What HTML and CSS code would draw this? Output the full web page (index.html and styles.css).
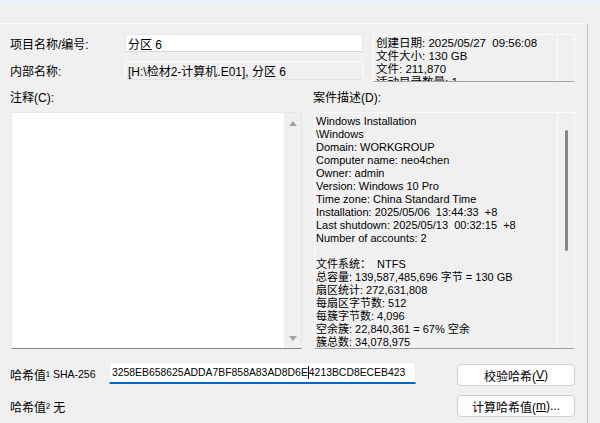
FILE: index.html
```html
<!DOCTYPE html>
<html lang="zh-CN">
<head>
<meta charset="utf-8">
<title>分区 6</title>
<link rel="stylesheet" href="styles.css">
</head>
<body>
<div class="titlebar"></div>
<div class="panel">
  <div class="head">
    <div class="lbl r1">项目名称/编号:</div>
    <div class="field edit r1">分区 6</div>
    <div class="info">
      <div class="info-text">
        <div>创建日期: 2025/05/27&nbsp; 09:56:08</div>
        <div>文件大小: 130 GB</div>
        <div>文件: 211,870</div>
        <div>活动目录数量: 1</div>
      </div>
      <div class="sb"></div>
    </div>
    <div class="lbl r2">内部名称:</div>
    <div class="field ro r2">[H:\检材2-计算机.E01], 分区 6</div>
  </div>

  <div class="boxes">
    <div class="col">
      <div class="cap">注释(C):</div>
      <div class="memo">
        <div class="memo-text"></div>
        <div class="memo-sb"><span class="arr up"></span><span class="arr down"></span></div>
      </div>
    </div>
    <div class="col">
      <div class="cap">案件描述(D):</div>
      <div class="desc">
        <div class="desc-text">
          <div>Windows Installation</div>
          <div>\Windows</div>
          <div>Domain: WORKGROUP</div>
          <div>Computer name: neo4chen</div>
          <div>Owner: admin</div>
          <div>Version: Windows 10 Pro</div>
          <div>Time zone: China Standard Time</div>
          <div>Installation: 2025/05/06&nbsp; 13:44:33&nbsp; +8</div>
          <div>Last shutdown: 2025/05/13&nbsp; 00:32:15&nbsp; +8</div>
          <div>Number of accounts: 2</div>
          <div>&nbsp;</div>
          <div>文件系统：&nbsp; NTFS</div>
          <div>总容量: 139,587,485,696 字节 = 130 GB</div>
          <div>扇区统计: 272,631,808</div>
          <div>每扇区字节数: 512</div>
          <div>每簇字节数: 4,096</div>
          <div>空余簇: 22,840,361 = 67% 空余</div>
          <div>簇总数: 34,078,975</div>
        </div>
        <div class="desc-sb"><span class="thumb"></span></div>
      </div>
    </div>
  </div>

  <div class="hash">
    <div class="lbl">哈希值¹<span class="alg">&nbsp;SHA-256</span></div>
    <div class="hash-input">3258EB658625ADDA7BF858A83AD8D6E<span class="caret"></span>4213BCD8ECEB423</div>
    <div class="gap"></div>
    <div class="btn b1">校验哈希(<u>V</u>)</div>
    <div class="lbl">哈希值² 无</div>
    <div class="spacer"></div>
    <div class="gap"></div>
    <div class="btn b2">计算哈希值(<u>m</u>)...</div>
  </div>
</div>
</body>
</html>
```
FILE: styles.css
```css
html, body {
  margin: 0;
  padding: 0;
}
body {
  width: 600px;
  height: 423px;
  overflow: hidden;
  background: #f0f0f0;
  font-family: "Liberation Sans", "Noto Sans CJK SC", sans-serif;
  font-size: 11px;
  color: #000;
}
.titlebar {
  height: 5px;
  background: #eef1f5;
}
.panel {
  margin-top: 18px;
  width: 588px;
  height: 400px;
  box-sizing: border-box;
  border-top: 1px solid #fbfbfb;
  border-right: 1px solid #bdbdbd;
  padding: 10px 0 0 10px;
}
.lbl {
  font-size: 12px;
  display: flex;
  align-items: center;
  white-space: nowrap;
}
.alg {
  font-size: 10.5px;
}
.head {
  display: grid;
  grid-template-columns: 115px 238px 10px 202px;
  grid-template-rows: 18px 19px;
  row-gap: 9px;
}
.r1 { grid-row: 1; }
.r2 { grid-row: 2; }
.lbl.r1, .lbl.r2 { grid-column: 1; }
.field {
  grid-column: 2;
  box-sizing: border-box;
  display: flex;
  align-items: center;
  padding-left: 2px;
  font-size: 12px;
  white-space: nowrap;
  overflow: hidden;
}
.field.edit {
  background: #fff;
  border: 1px solid #e6e6e6;
  border-bottom-color: #d8d8d8;
}
.field.ro {
  background: #f0f0f0;
  border: 1px solid #fafafa;
  border-bottom-color: #e2e2e2;
}
.info {
  grid-column: 4;
  grid-row: 1 / span 2;
  height: 48px;
  box-sizing: border-box;
  display: flex;
  border: 1px solid #fbfbfb;
  border-bottom-color: #a3a3a3;
  overflow: hidden;
}
.info-text {
  flex: 1;
  padding: 2px 0 0 2px;
  line-height: 13px;
  font-size: 11.5px;
  white-space: nowrap;
  overflow: hidden;
}
.sb {
  width: 16px;
  border-left: 1px solid #fbfbfb;
}

.boxes {
  margin-top: 12px;
  display: grid;
  grid-template-columns: 292px 262px;
  column-gap: 11px;
}
.cap {
  font-size: 12px;
  line-height: 13px;
  height: 13px;
  margin-bottom: 7px;
  white-space: nowrap;
}
.memo {
  margin-left: 1px;
  height: 237px;
  box-sizing: border-box;
  display: flex;
  background: #fff;
  border: 1px solid #e8e8e8;
  border-bottom-color: #868686;
}
.memo-text { flex: 1; }
.memo-sb {
  width: 17px;
  background: #f0f0f0;
  display: flex;
  flex-direction: column;
  justify-content: space-between;
  align-items: center;
  padding: 8px 0 7px;
}
.arr {
  width: 0;
  height: 0;
  border-left: 4px solid transparent;
  border-right: 4px solid transparent;
}
.arr.up { border-bottom: 5px solid #a3a3a3; }
.arr.down { border-top: 5px solid #a3a3a3; }

.desc {
  margin-left: 1px;
  height: 237px;
  box-sizing: border-box;
  display: flex;
  background: #f0f0f0;
  border: 1px solid #fbfbfb;
  border-bottom-color: #a0a0a0;
  overflow: hidden;
}
.desc-text {
  flex: 1;
  padding: 2px 0 0 1px;
  line-height: 13px;
  white-space: nowrap;
  overflow: hidden;
}
.desc-sb {
  width: 17px;
  border-left: 1px solid #fbfbfb;
  display: flex;
  justify-content: center;
  padding-top: 17px;
  box-sizing: border-box;
}
.thumb {
  width: 3px;
  height: 121px;
  background: #858585;
  border-radius: 2px;
}

.hash {
  margin-top: 13px;
  display: grid;
  grid-template-columns: 99px 307px 41px 118px;
  grid-template-rows: 24px 22px;
  row-gap: 9px;
}
.hash-input {
  align-self: start;
  height: 22px;
  box-sizing: border-box;
  background: #fff;
  border: 1px solid #ececec;
  border-bottom: 2px solid #0067c0;
  border-radius: 3px 3px 0 0;
  padding-left: 2px;
  display: flex;
  align-items: center;
  white-space: nowrap;
  overflow: hidden;
  font-size: 10.4px;
}
.caret {
  display: inline-block;
  width: 1px;
  height: 13px;
  background: #000;
}
.btn {
  height: 22px;
  box-sizing: border-box;
  background: #fdfdfd;
  border: 1px solid #d0d0d0;
  border-radius: 4px;
  display: flex;
  align-items: center;
  justify-content: center;
  font-size: 12px;
  white-space: nowrap;
}
.btn u { text-underline-offset: 1px; }
.b1 { align-self: end; }
.b2 { align-self: start; }
```
